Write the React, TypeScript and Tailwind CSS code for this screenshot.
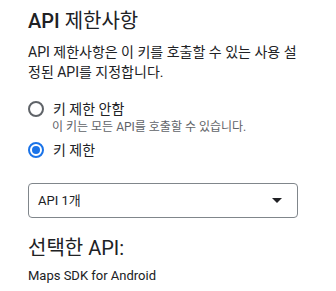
import * as React from "react";

const font = { fontFamily: 'Roboto, "Noto Sans CJK KR", sans-serif' };

function Radio({ checked }: { checked: boolean }) {
  return (
    <span
      className={`flex h-[16px] w-[16px] shrink-0 items-center justify-center rounded-full border-2 ${
        checked ? "border-[#1a73e8]" : "border-[#5f6368]"
      }`}
    >
      {checked && <span className="h-[8px] w-[8px] rounded-full bg-[#1a73e8]" />}
    </span>
  );
}

export default function App() {
  const [restricted, setRestricted] = React.useState(true);

  return (
    <div className="min-h-screen bg-white text-[#202124]" style={font}>
      <div className="w-[270px] pl-0 ml-[28px] pt-[7px]">
        {/* 제목 */}
        <h2 className="text-[20px] leading-7 font-normal">
          <span className="font-medium">API</span> 제한사항
        </h2>
        <p className="mt-[7px] text-[14px] leading-5">
          API 제한사항은 이 키를 호출할 수 있는 사용 설정된 API를 지정합니다.
        </p>

        {/* 라디오 */}
        <div className="mt-[17px]">
          <button className="flex items-center gap-[9px] text-[14px] leading-5" onClick={() => setRestricted(false)}>
            <Radio checked={!restricted} />
            <span>키 제한 안함</span>
          </button>
          <div className="pl-[24px] text-[12px] leading-4 text-[#5f6368]">이 키는 모든 API를 호출할 수 있습니다.</div>
          <button className="mt-[5px] flex items-center gap-[9px] text-[14px] leading-5" onClick={() => setRestricted(true)}>
            <Radio checked={restricted} />
            <span>키 제한</span>
          </button>
        </div>

        {/* 드롭다운 */}
        <div className="mt-[23px] flex h-[35px] items-center justify-between rounded-[4px] border border-[#80868b] pl-[9px] pr-[15px]">
          <span className="text-[13px]">API 1개</span>
          <svg width="10" height="5" viewBox="0 0 10 5">
            <path d="M0 0h10L5 5z" fill="#202124" />
          </svg>
        </div>

        <h3 className="mt-[16px] text-[20px] leading-7 font-normal">선택한 API:</h3>
        <div className="mt-[4px] text-[13px] leading-5">Maps SDK for Android</div>
      </div>
    </div>
  );
}
